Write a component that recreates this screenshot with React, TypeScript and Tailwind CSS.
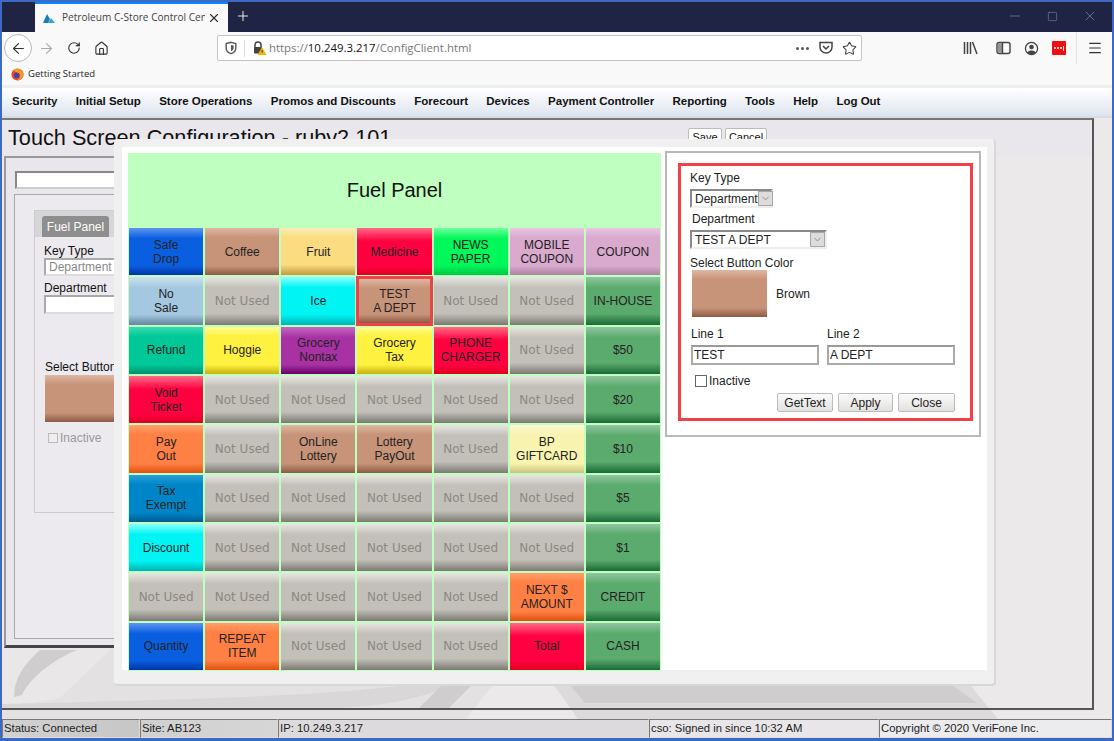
import React from "react";
import { ArrowLeft, ArrowRight, RotateCw, Home, Minus, Square, X, Plus, Star, Menu, ChevronDown } from "lucide-react";

const G: Record<string, string> = {
  blue: "bg-[linear-gradient(180deg,#5f95f2_0%,#0a5fe0_22%,#0a5fe0_80%,#0034a6_100%)]",
  brown: "bg-[linear-gradient(180deg,#dfb7a3_0%,#c89479_20%,#c89479_80%,#8d5a45_100%)]",
  sand: "bg-[linear-gradient(180deg,#fdeeb5_0%,#fbdc80_20%,#fbdc80_78%,#c39a40_100%)]",
  red: "bg-[linear-gradient(180deg,#ff6a85_0%,#ff0040_28%,#ff0040_82%,#e00020_100%)]",
  neon: "bg-[linear-gradient(180deg,#70ff9c_0%,#00f85a_22%,#00f85a_80%,#00c844_100%)]",
  pink: "bg-[linear-gradient(180deg,#e8c6e2_0%,#d9aace_20%,#d9aace_80%,#ae80a2_100%)]",
  sky: "bg-[linear-gradient(180deg,#cce0ee_0%,#a4c8e0_22%,#a4c8e0_78%,#64869e_100%)]",
  gray: "bg-[linear-gradient(180deg,#e8e6e2_0%,#c3c0b9_22%,#c3c0b9_76%,#7c7973_100%)]",
  cyan: "bg-[linear-gradient(180deg,#8cffff_0%,#00f4f4_22%,#00f4f4_78%,#00b4b4_100%)]",
  teal: "bg-[linear-gradient(180deg,#38dcb0_0%,#00c898_20%,#00c898_80%,#00906c_100%)]",
  yellow: "bg-[linear-gradient(180deg,#ffff90_0%,#fff140_20%,#fff140_80%,#c8b010_100%)]",
  purple: "bg-[linear-gradient(180deg,#c468c4_0%,#a832a4_22%,#a832a4_80%,#680068_100%)]",
  green: "bg-[linear-gradient(180deg,#90c6a0_0%,#5cab6e_22%,#5cab6e_76%,#1a6a38_100%)]",
  orange: "bg-[linear-gradient(180deg,#ff9f68_0%,#ff8044_20%,#ff8044_80%,#e0500f_100%)]",
  pale: "bg-[linear-gradient(180deg,#fbf8d0_0%,#f8f4b0_22%,#f8f4b0_80%,#c8c480_100%)]",
  tax: "bg-[linear-gradient(180deg,#2aa0d8_0%,#0086c8_20%,#0086c8_80%,#005a90_100%)]",
};

type K = [string, string, string?];
const N: K = ["Not Used", "gray"];
const keys: K[] = [
  ["Safe|Drop", "blue"], ["Coffee", "brown"], ["Fruit", "sand"], ["Medicine", "red"], ["NEWS|PAPER", "neon"], ["MOBILE|COUPON", "pink"], ["COUPON", "pink"],
  ["No|Sale", "sky"], N, ["Ice", "cyan"], ["TEST|A DEPT", "brown", "sel"], N, N, ["IN-HOUSE", "green"],
  ["Refund", "teal"], ["Hoggie", "yellow"], ["Grocery|Nontax", "purple"], ["Grocery|Tax", "yellow"], ["PHONE|CHARGER", "red"], N, ["$50", "green"],
  ["Void|Ticket", "red"], N, N, N, N, N, ["$20", "green"],
  ["Pay|Out", "orange"], N, ["OnLine|Lottery", "brown"], ["Lottery|PayOut", "brown"], N, ["BP|GIFTCARD", "pale"], ["$10", "green"],
  ["Tax|Exempt", "tax"], N, N, N, N, N, ["$5", "green"],
  ["Discount", "cyan"], N, N, N, N, N, ["$1", "green"],
  N, N, N, N, N, ["NEXT $|AMOUNT", "orange"], ["CREDIT", "green"],
  ["Quantity", "blue"], ["REPEAT|ITEM", "orange"], N, N, N, ["Total", "red"], ["CASH", "green"],
];

const menu = ["Security", "Initial Setup", "Store Operations", "Promos and Discounts", "Forecourt", "Devices", "Payment Controller", "Reporting", "Tools", "Help", "Log Out"];

function Sel({ w, value }: { w: string; value: string }) {
  return (
    <div className={`${w} h-[19px] flex items-center bg-white border-2 border-t-[#8a8a8a] border-l-[#8a8a8a] border-r-[#eee] border-b-[#eee] text-[12px] text-[#222] pl-[3px]`}>
      <span className="flex-1 whitespace-nowrap">{value}</span>
      <span className="w-[15px] h-[15px] bg-[#dcdcdc] border border-[#a8a8a8] flex items-center justify-center shrink-0">
        <ChevronDown size={11} strokeWidth={1.2} color="#555" />
      </span>
    </div>
  );
}

function Btn({ w, children }: { w: string; children: React.ReactNode }) {
  return (
    <div className={`${w} h-[19px] flex items-center justify-center rounded-[2px] border border-[#bdbdbd] bg-[linear-gradient(180deg,#fbfbfa,#e2e1de)] text-[12px] text-[#222]`}>
      {children}
    </div>
  );
}

export default function App() {
  return (
    <div className="w-[1114px] h-[741px] overflow-hidden flex flex-col border-x-[2px] border-t-[2px] border-b-[3px] border-[#3b6ac0] bg-[#f9f9fa] [font-family:Liberation_Sans,Arial,sans-serif] text-[#111]">
      {/* title bar */}
      <div className="h-[30px] shrink-0 bg-[#1f2444] flex items-end pl-[33px] relative">
        <div className="w-[193px] h-[30px] bg-[#f9f9fa] border-t-[2px] border-[#0a84ff] flex items-center pl-[7px] pr-[7px] [font-family:Open_Sans,sans-serif] text-[10.1px] text-[#444]">
          <svg width="14" height="12" viewBox="0 0 14 12" className="shrink-0 mr-[6px]"><path d="M1 11 L5 2 L8 7 L6 11Z" fill="#1a7fb8" /><path d="M6 11 L9 6 L13 11Z" fill="#3aa0d0" /></svg>
          <span className="flex-1 overflow-hidden whitespace-nowrap">Petroleum C-Store Control Cen</span>
          <X size={14} strokeWidth={2} color="#333" className="shrink-0 ml-[2px]" />
        </div>
        <Plus size={16} strokeWidth={1.5} color="#e8e8ee" className="ml-[7px] mb-[8px]" />
        <div className="ml-auto flex items-center h-[30px] gap-[24px] pr-[14px] pb-[2px]">
          <Minus size={16} strokeWidth={1} color="#8a8ea4" />
          <Square size={11} strokeWidth={1} color="#a0a4b8" />
          <X size={16} strokeWidth={1} color="#8a8ea4" />
        </div>
      </div>
      {/* toolbar */}
      <div className="h-[32px] shrink-0 flex items-center text-[#333] relative">
        <div className="w-[28px] h-[28px] ml-[2px] rounded-full border border-[#b8b8b8] bg-white flex items-center justify-center"><ArrowLeft size={17} strokeWidth={1.6} color="#333" /></div>
        <ArrowRight size={17} strokeWidth={1.6} color="#aaa" className="ml-[6px]" />
        <RotateCw size={14} strokeWidth={2} color="#333" className="ml-[12px]" />
        <Home size={15} strokeWidth={1.8} color="#333" className="ml-[13px]" />
        <div className="ml-[108px] w-[645px] h-[26px] bg-white border border-[#c4c4c4] rounded-[2px] flex items-center pl-[6px] pr-[4px] [font-family:Open_Sans,sans-serif] text-[11.4px]">
          <svg width="14" height="14" viewBox="0 0 16 16" className="shrink-0"><path d="M8 1.5 L13.5 3 V8 C13.5 11 11 13.5 8 14.5 C5 13.5 2.5 11 2.5 8 V3Z" fill="none" stroke="#555" strokeWidth="1.6" /><path d="M8 4.5 L11 5.2 V8 C11 9.6 9.6 11 8 11.6Z" fill="#555" /></svg>
          <span className="w-px h-[17px] bg-[#ddd] mx-[6px]" />
          <svg width="16" height="16" viewBox="0 0 16 16" className="shrink-0"><path d="M4 8 V5 a3 3 0 0 1 6 0 V7" fill="none" stroke="#444" strokeWidth="1.5" /><rect x="3" y="7" width="8" height="6.5" rx="1" fill="#444" /><path d="M11 7 L15.5 15 H6.5Z" fill="#f5b400" /><rect x="10.6" y="10" width="1" height="2.6" fill="#333" /></svg>
          <span className="ml-[2px] whitespace-nowrap text-[#777]">https://<span className="text-[#111]">10.249.3.217</span>/ConfigClient.html</span>
          <div className="ml-auto flex items-center">
            <span className="flex gap-[2px]"><i className="w-[3px] h-[3px] rounded-full bg-[#555]" /><i className="w-[3px] h-[3px] rounded-full bg-[#555]" /><i className="w-[3px] h-[3px] rounded-full bg-[#555]" /></span>
            <svg width="16" height="16" viewBox="0 0 16 16" className="ml-[9px]"><path d="M2 2.5 H14 V7 A6 6 0 0 1 2 7Z" fill="none" stroke="#444" strokeWidth="1.5" /><path d="M5 6 L8 9 L11 6" fill="none" stroke="#444" strokeWidth="1.5" /></svg>
            <Star size={15} strokeWidth={1.7} color="#444" className="ml-[8px]" />
          </div>
        </div>
        <div className="ml-[101px] flex items-center">
          <svg width="15" height="14" viewBox="0 0 15 14"><path d="M1.5 1 V13 M4.5 1 V13 M7.5 1 V13 M9.5 1 L14 13" stroke="#444" strokeWidth="1.5" fill="none" /></svg>
          <svg width="15" height="14" viewBox="0 0 15 14" className="ml-[18px]"><rect x="1" y="1.5" width="13" height="11" rx="2" fill="none" stroke="#444" strokeWidth="1.4" /><rect x="2" y="2.5" width="4.5" height="9" fill="#444" opacity=".55" /><path d="M6.5 1.5 V12.5" stroke="#444" strokeWidth="1.4" /></svg>
          <svg width="15" height="15" viewBox="0 0 16 16" className="ml-[13px]"><circle cx="8" cy="8" r="6.5" fill="none" stroke="#444" strokeWidth="1.4" /><circle cx="8" cy="6.4" r="2.5" fill="#444" /><path d="M3.6 12.2 C5 9.6 11 9.6 12.4 12.2 C10 14.5 6 14.5 3.6 12.2Z" fill="#444" /></svg>
          <div className="ml-[13px] w-[14px] h-[14px] bg-[#ee0f10] rounded-[1px] flex items-center justify-center gap-[1px]"><i className="w-[2px] h-[2px] rounded-full bg-white" /><i className="w-[2px] h-[2px] rounded-full bg-white" /><i className="w-[2px] h-[2px] rounded-full bg-white" /><i className="w-[1px] h-[5px] bg-white" /></div>
          <span className="w-px h-[32px] bg-[#e4e4e4] ml-[10px]" />
          <Menu size={16} strokeWidth={1.7} color="#333" className="ml-[10px]" />
        </div>
      </div>
      {/* bookmarks */}
      <div className="h-[21px] shrink-0 flex items-center pl-[9px] [font-family:Open_Sans,sans-serif] text-[9.5px] text-[#222]">
        <svg width="13" height="13" viewBox="0 0 16 16"><circle cx="8" cy="8" r="7.5" fill="#e8492e" /><path d="M3 3 C6 0 13 0 15 6 C16 11 12 15 8 15 C12 12 12 7 8 6Z" fill="#f59a1c" /><circle cx="7" cy="9" r="3.5" fill="#4a3fa8" /></svg>
        <span className="ml-[4px]">Getting Started</span>
      </div>
      <div className="h-[3px] shrink-0 bg-[#efeff0]" />
      {/* menu bar */}
      <div className="h-[30px] shrink-0 flex items-start pt-[6px] pl-[10px] gap-[18.3px] bg-[linear-gradient(180deg,#ffffff_0%,#e0e6f0_88%,#d8d8dc_100%)] font-bold text-[11.5px] leading-[14px] text-[#111]">
        {menu.map((m) => <span key={m} className="whitespace-nowrap">{m}</span>)}
      </div>
      {/* main */}
      <div className="flex-1 relative bg-[#ebe9ea] overflow-hidden flex flex-col">
        <svg className="absolute left-0 top-[530px]" width="1110" height="71" viewBox="0 0 1110 71">
          <path d="M0 0 H520 L464 71 H0Z" fill="#e3e1e2" />
          <path d="M0 0 H110 L58 50 L0 60Z" fill="#e9e7e8" />
          <path d="M38 2 C20 18 12 32 12 49 L20 47 C28 30 50 12 75 2Z" fill="#cfcdce" />
          <path d="M0 56 C150 52 300 50 405 37 C420 33 440 32 450 37 C420 50 380 60 320 60 H0Z" fill="#d9d7d8" />
          <path d="M440 37 L470 37 L445 62 H415Z" fill="#cfcdce" />
          <path d="M552 37 H968 L996 71 H576Z" fill="#dcdadb" />
          <path d="M568 37 H950 L975 55 H583Z" fill="#cfcdce" />
        </svg>
        <div className="relative w-[1092px] h-[592px] border-t-[2px] border-t-[#777] border-r-[2px] border-r-[#555] border-b-[2px] border-b-[#555] shrink-0">
          <div className="relative flex items-start h-[36px] pl-[6px] bg-[#e9e7eb]">
            <span className="text-[21.7px] leading-[26px] mt-[5px] whitespace-nowrap">Touch Screen Configuration - ruby2 101</span>
            <div className="absolute left-[686px] top-[8px] flex gap-[3px] text-[11px]">
              <span className="w-[34px] text-center border border-[#bbb] rounded-[2px] bg-white h-[18px]">Save</span>
              <span className="w-[42px] text-center border border-[#bbb] rounded-[2px] bg-white h-[18px]">Cancel</span>
            </div>
          </div>
          <div className="w-[800px] h-[492px] ml-[2px] bg-[#e9e7eb] border-t-[2px] border-l-[2px] border-[#999] border-b-[3px] border-b-[#444] pl-[9px] pt-[13px]">
            <div className="w-[300px] h-[18px] bg-white border-2 border-t-[#888] border-l-[#888] border-b-[#ccc] border-r-[#ccc]" />
            <div className="mt-[5px] -ml-[1px] w-[500px] h-[445px] border border-[#aaa] bg-[#eceaee] pt-[15px] pl-[19px]">
              <div className="w-[400px] h-[303px] border border-[#ccc]">
                <div className="h-[26px] bg-[#d6d5d8] pl-[7px] pt-[5px]">
                  <div className="w-[67px] h-[21px] bg-[#8e8e8e] rounded-t-[3px] text-[12px] text-white flex items-center justify-center">Fuel Panel</div>
                </div>
                <div className="pl-[9px] text-[12px]">
                  <div className="mt-[7px] leading-[14px]">Key Type</div>
                  <div className="w-[75px] h-[18px] bg-white border-2 border-[#aaa] border-r-0 border-b-[#ddd] text-[#888] pl-[3px] leading-[14px]">Department</div>
                  <div className="mt-[5px] leading-[14px]">Department</div>
                  <div className="w-[75px] h-[19px] bg-white border-2 border-[#aaa] border-r-0 border-b-[#ddd]" />
                  <div className="mt-[46px] ml-[1px] leading-[14px]">Select Button</div>
                  <div className="w-[80px] h-[47px] ml-[1px] mt-[1px] bg-[linear-gradient(180deg,#dfb7a3_0%,#c89479_20%,#c89479_80%,#8d5a45_100%)]" />
                  <div className="flex items-center mt-[7px] ml-[4px] text-[#999]"><span className="w-[10px] h-[10px] border border-[#bbb] bg-[#eee] mr-[2px]" />Inactive</div>
                </div>
              </div>
            </div>
          </div>
        </div>

        {/* status bar */}
        <div className="relative flex h-[19px] mt-[9px] shrink-0 text-[11.3px] text-[#222]">
          {[
            ["w-[138px] bg-[linear-gradient(90deg,#d2d2d2,#c6c6c6)]", "Status: Connected"],
            ["w-[138px] bg-[linear-gradient(90deg,#d0d0d0,#d6d6d6)]", "Site: AB123"],
            ["w-[371px] bg-[#dcdadc]", "IP: 10.249.3.217"],
            ["w-[230px] bg-[#e8e6e9]", "cso: Signed in since 10:32 AM"],
            ["w-[233px] bg-[#ecebee]", "Copyright © 2020 VeriFone Inc."],
          ].map(([c, t]) => (
            <div key={t} className={`${c} border border-t-[#777] border-l-[#777] border-r-[#ddd] border-b-[#ddd] pl-[1px] leading-[17px] whitespace-nowrap`}>{t}</div>
          ))}
        </div>

        {/* modal */}
        <div className="absolute left-[112px] top-[21px] w-[882px] h-[547px] rounded-[4px] bg-[#f0f0f0] border-r-[2px] border-b-[2px] border-[#d8d8d8] pl-[8px] pt-[8px] pr-[7px] pb-[14px]">
          <div className="h-full bg-white flex pl-[6px] pt-[6px]">
            <div className="w-[533px] shrink-0">
              <div className="h-[74px] bg-[#bfffbf] flex items-center justify-center text-[20px] text-[#111]">Fuel Panel</div>
              <div className="grid grid-cols-7 grid-rows-[repeat(9,1fr)] h-[444px] gap-[2px] bg-[#bfffbf] p-[1px]">
                {keys.map(([t, c, s], i) => {
                  const unused = t === "Not Used";
                  return (
                    <div
                      key={i}
                      className={`${G[c]} flex flex-col items-center justify-center text-center leading-[14px] ${unused ? "[font-family:DejaVu_Sans,sans-serif] text-[12px] text-[#8b8882]" : "text-[12px] text-[#222]"} ${s ? "border-[3px] border-[#f04048] -m-[1px] relative z-10" : ""}`}
                    >
                      {t.split("|").map((l) => <span key={l} className="whitespace-nowrap">{l}</span>)}
                    </div>
                  );
                })}
              </div>
            </div>
            <div className="ml-[4px] w-[316px] h-[286px] border-2 border-[#b8b8b8] px-[11px] pt-[10px] self-start -mt-[2px]">
              <div className="w-[295px] h-[258px] border-[3px] border-[#f04048] pl-[9px] pt-[5px] text-[12px] text-[#222]">
                <div className="leading-[14px]">Key Type</div>
                <Sel w="w-[83px] mt-[4px]" value="Department" />
                <div className="ml-[2px] mt-[4px] leading-[14px]">Department</div>
                <Sel w="w-[137px] mt-[4px]" value="TEST A DEPT" />
                <div className="mt-[7px] leading-[14px]">Select Button Color</div>
                <div className="flex items-center ml-[2px]">
                  <div className={`w-[75px] h-[47px] ${G.brown}`} />
                  <span className="ml-[9px]">Brown</span>
                </div>
                <div className="flex mt-[10px] ml-[1px]">
                  <div className="w-[136px]">
                    <div className="leading-[14px]">Line 1</div>
                    <div className="w-[128px] h-[20px] mt-[4px] border-2 border-[#aaa] border-t-[#999] bg-white pl-[1px] leading-[16px]">TEST</div>
                  </div>
                  <div className="w-[128px]">
                    <div className="leading-[14px]">Line 2</div>
                    <div className="w-[128px] h-[20px] mt-[4px] border-2 border-[#aaa] border-t-[#999] bg-white pl-[1px] leading-[16px]">A DEPT</div>
                  </div>
                </div>
                <div className="flex items-center ml-[5px] mt-[9px] leading-[14px]">
                  <span className="w-[12px] h-[12px] border border-[#666] mr-[2px]" />Inactive
                </div>
                <div className="flex justify-end gap-[5px] mt-[5px] mr-[15px]">
                  <Btn w="w-[56px]">GetText</Btn>
                  <Btn w="w-[55px]">Apply</Btn>
                  <Btn w="w-[57px]">Close</Btn>
                </div>
              </div>
            </div>
          </div>
        </div>
      </div>
    </div>
  );
}
